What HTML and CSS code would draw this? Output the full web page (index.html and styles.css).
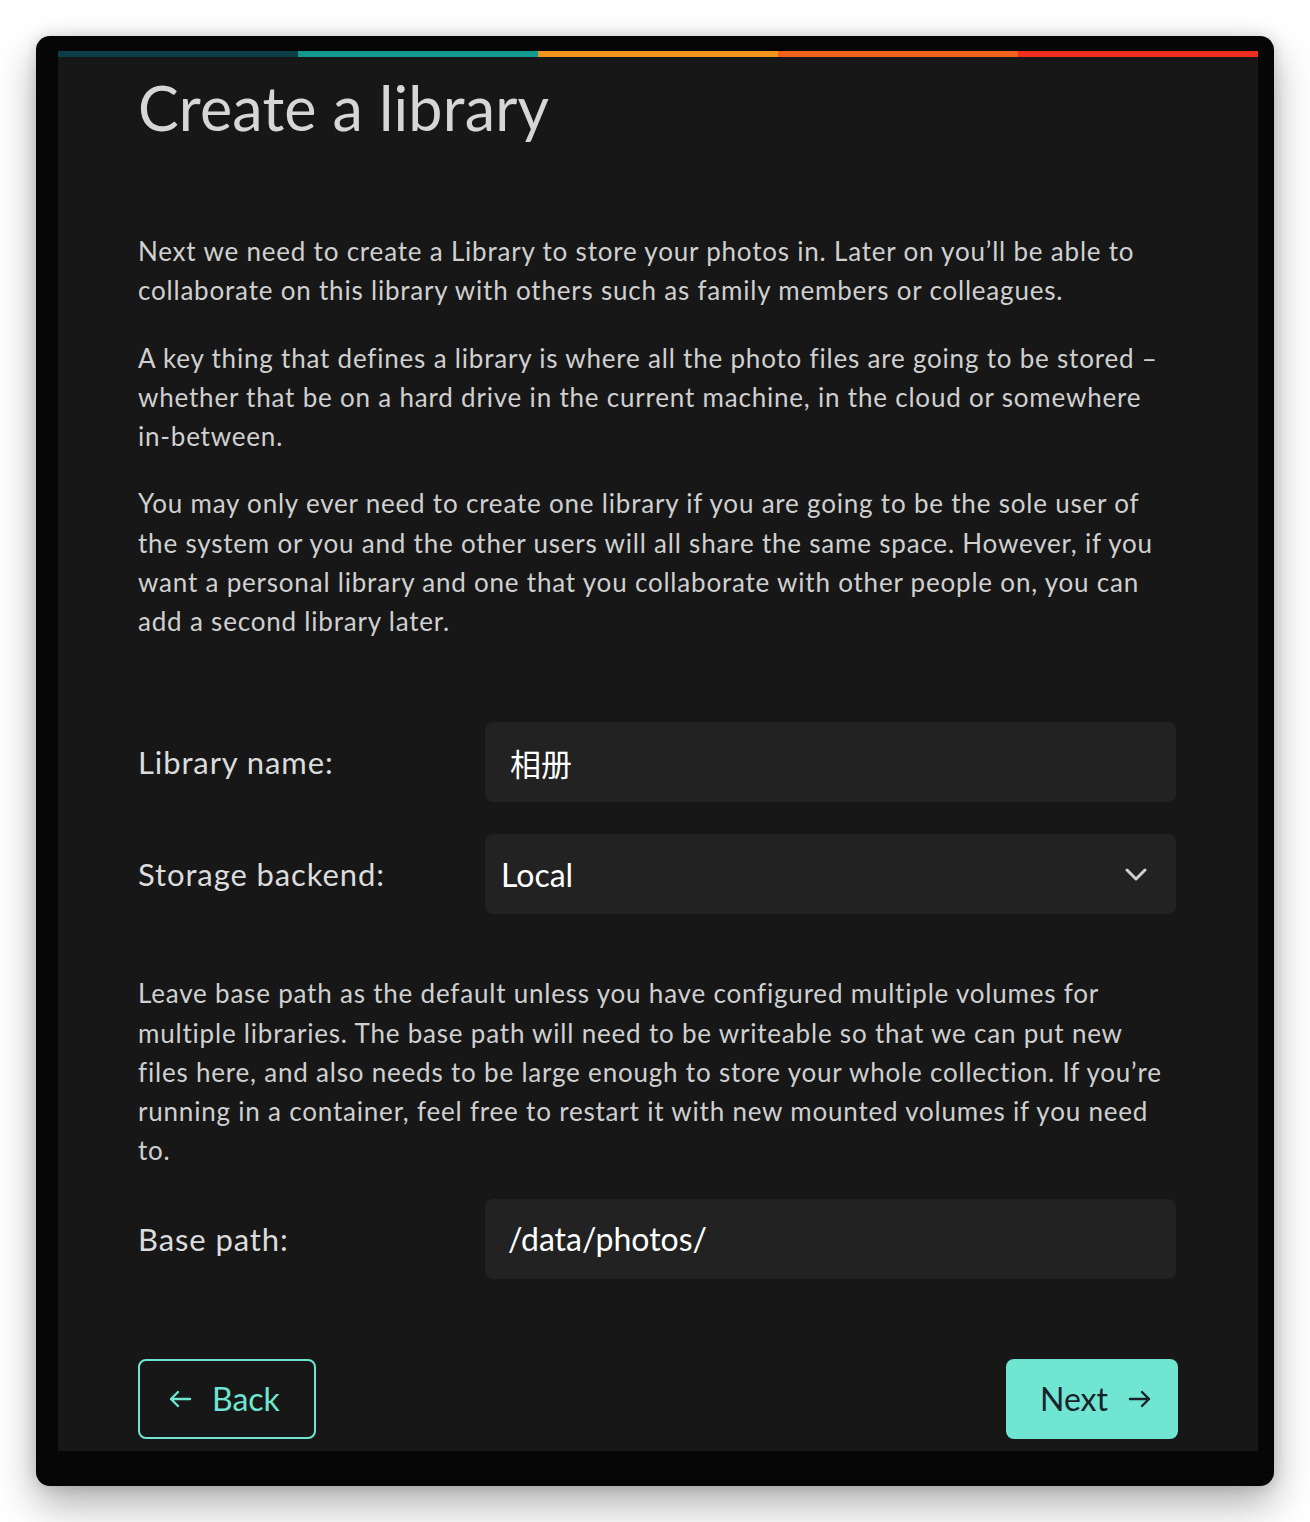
FILE: index.html
```html
<!DOCTYPE html>
<html lang="en">
<head>
<meta charset="utf-8">
<title>Create a library</title>
<link rel="stylesheet" href="styles.css">
</head>
<body>
<div class="window">
  <div class="panel">
    <div class="stripes">
      <span class="s1"></span><span class="s2"></span><span class="s3"></span><span class="s4"></span><span class="s5"></span>
    </div>
    <div class="content">
      <h1 class="title">Create a library</h1>
      <p class="intro first">Next we need to create a Library to store your photos in. Later on you’ll be able to collaborate on this library with others such as family members or colleagues.</p>
      <p class="intro">A key thing that defines a library is where all the photo files are going to be stored – whether that be on a hard drive in the current machine, in the cloud or somewhere <span class="nowrap">in-between.</span></p>
      <p class="intro">You may only ever need to create one library if you are going to be the sole user of the system or you and the other users will all share the same space. However, if you want a personal library and one that you collaborate with other people on, you can add a second library later.</p>

      <div class="row row-first">
        <label class="label">Library name:</label>
        <div class="field"><span class="value cjk">相册</span></div>
      </div>
      <div class="row row-second">
        <label class="label">Storage backend:</label>
        <div class="field select">
          <span class="value">Local</span>
          <svg class="chev" width="22" height="13" viewBox="0 0 22 13"><path d="M2 2 L11 11 L20 2" fill="none" stroke="#d0d0d0" stroke-width="3" stroke-linecap="round" stroke-linejoin="round"/></svg>
        </div>
      </div>

      <p class="intro path-note">Leave base path as the default unless you have configured multiple volumes for multiple libraries. The base path will need to be writeable so that we can put new files here, and also needs to be large enough to store your whole collection. If you’re running in a container, feel free to restart it with new mounted volumes if you need to.</p>

      <div class="row row-third">
        <label class="label">Base path:</label>
        <div class="field"><span class="value">/data/photos/</span></div>
      </div>

      <div class="actions">
        <button class="btn back">
          <svg width="24" height="20" viewBox="0 0 24 20"><path d="M22 10 H3 M10 3 L3 10 L10 17" fill="none" stroke="#6fe5d2" stroke-width="2.4" stroke-linecap="round" stroke-linejoin="round"/></svg>
          <span>Back</span>
        </button>
        <button class="btn next">
          <span>Next</span>
          <svg width="24" height="20" viewBox="0 0 24 20"><path d="M2 10 H21 M14 3 L21 10 L14 17" fill="none" stroke="#17222b" stroke-width="2.4" stroke-linecap="round" stroke-linejoin="round"/></svg>
        </button>
      </div>
    </div>
  </div>
</div>
</body>
</html>
```

FILE: styles.css
```css
* { box-sizing: border-box; }
html, body { margin: 0; padding: 0; }
body {
  background: #ffffff;
  width: 1310px;
  height: 1522px;
  font-family: "Lato", "Noto Sans CJK SC", sans-serif;
  overflow: hidden;
}
.window {
  margin: 36px 0 0 36px;
  width: 1238px;
  height: 1450px;
  background: #060606;
  border-radius: 14px;
  box-shadow: 0 18px 40px rgba(0, 0, 0, 0.32), 0 0 14px rgba(0,0,0,0.15);
  padding: 15px 16px 35px 22px;
}
.panel {
  width: 1200px;
  height: 1400px;
  background: #171717;
}
.stripes {
  display: flex;
  height: 6px;
}
.stripes span { flex: 1; }
.s1 { background: #0c3d47; }
.s2 { background: #139a8e; }
.s3 { background: #f2951d; }
.s4 { background: #f0611d; }
.s5 { background: #ee2f1f; }
.content {
  padding: 0 80px;
}
.title {
  margin: 15px 0 0 0;
  font-size: 61px;
  line-height: 72px;
  font-weight: 400;
  color: #d6d6d6;
  letter-spacing: 0.2px;
}
.intro {
  margin: 0 0 28px 0;
  max-width: 1034px;
  font-size: 26px;
  line-height: 39.25px;
  letter-spacing: 0.8px;
  color: #d0d0d0;
}
.nowrap { white-space: nowrap; }
.intro.first { margin-top: 88px; }
.row {
  display: grid;
  grid-template-columns: 347px 691px;
  align-items: center;
}
.row-first { margin-top: 81px; }
.row-second { margin-top: 32px; }
.row-third { margin-top: 27px; }
.label {
  font-size: 31px;
  letter-spacing: 0.9px;
  color: #dcdcdc;
}
.field {
  height: 80px;
  background: #222222;
  border-radius: 8px;
  display: flex;
  align-items: center;
  padding: 0 23px;
}
.field.select {
  padding: 0 29px 0 16px;
  justify-content: space-between;
}
.value {
  font-size: 32px;
  color: #ffffff;
}
.value.cjk {
  font-family: "Noto Sans CJK SC", sans-serif;
  font-size: 31px;
  margin-left: 2px;
}
.path-note { margin-top: 60px; }
.actions {
  margin-top: 80px;
  display: flex;
  justify-content: space-between;
}
.btn {
  height: 80px;
  border-radius: 8px;
  font-family: "Lato", sans-serif;
  font-size: 32px;
  display: flex;
  align-items: center;
  gap: 20px;
  cursor: pointer;
}
.btn.back {
  width: 178px;
  background: transparent;
  border: 2px solid #6fe5d2;
  color: #6fe5d2;
  padding: 0 0 0 28px;
}
.btn.next {
  width: 172px;
  background: #6fe5d2;
  border: none;
  color: #17222b;
  padding: 0 0 0 34px;
}
```
